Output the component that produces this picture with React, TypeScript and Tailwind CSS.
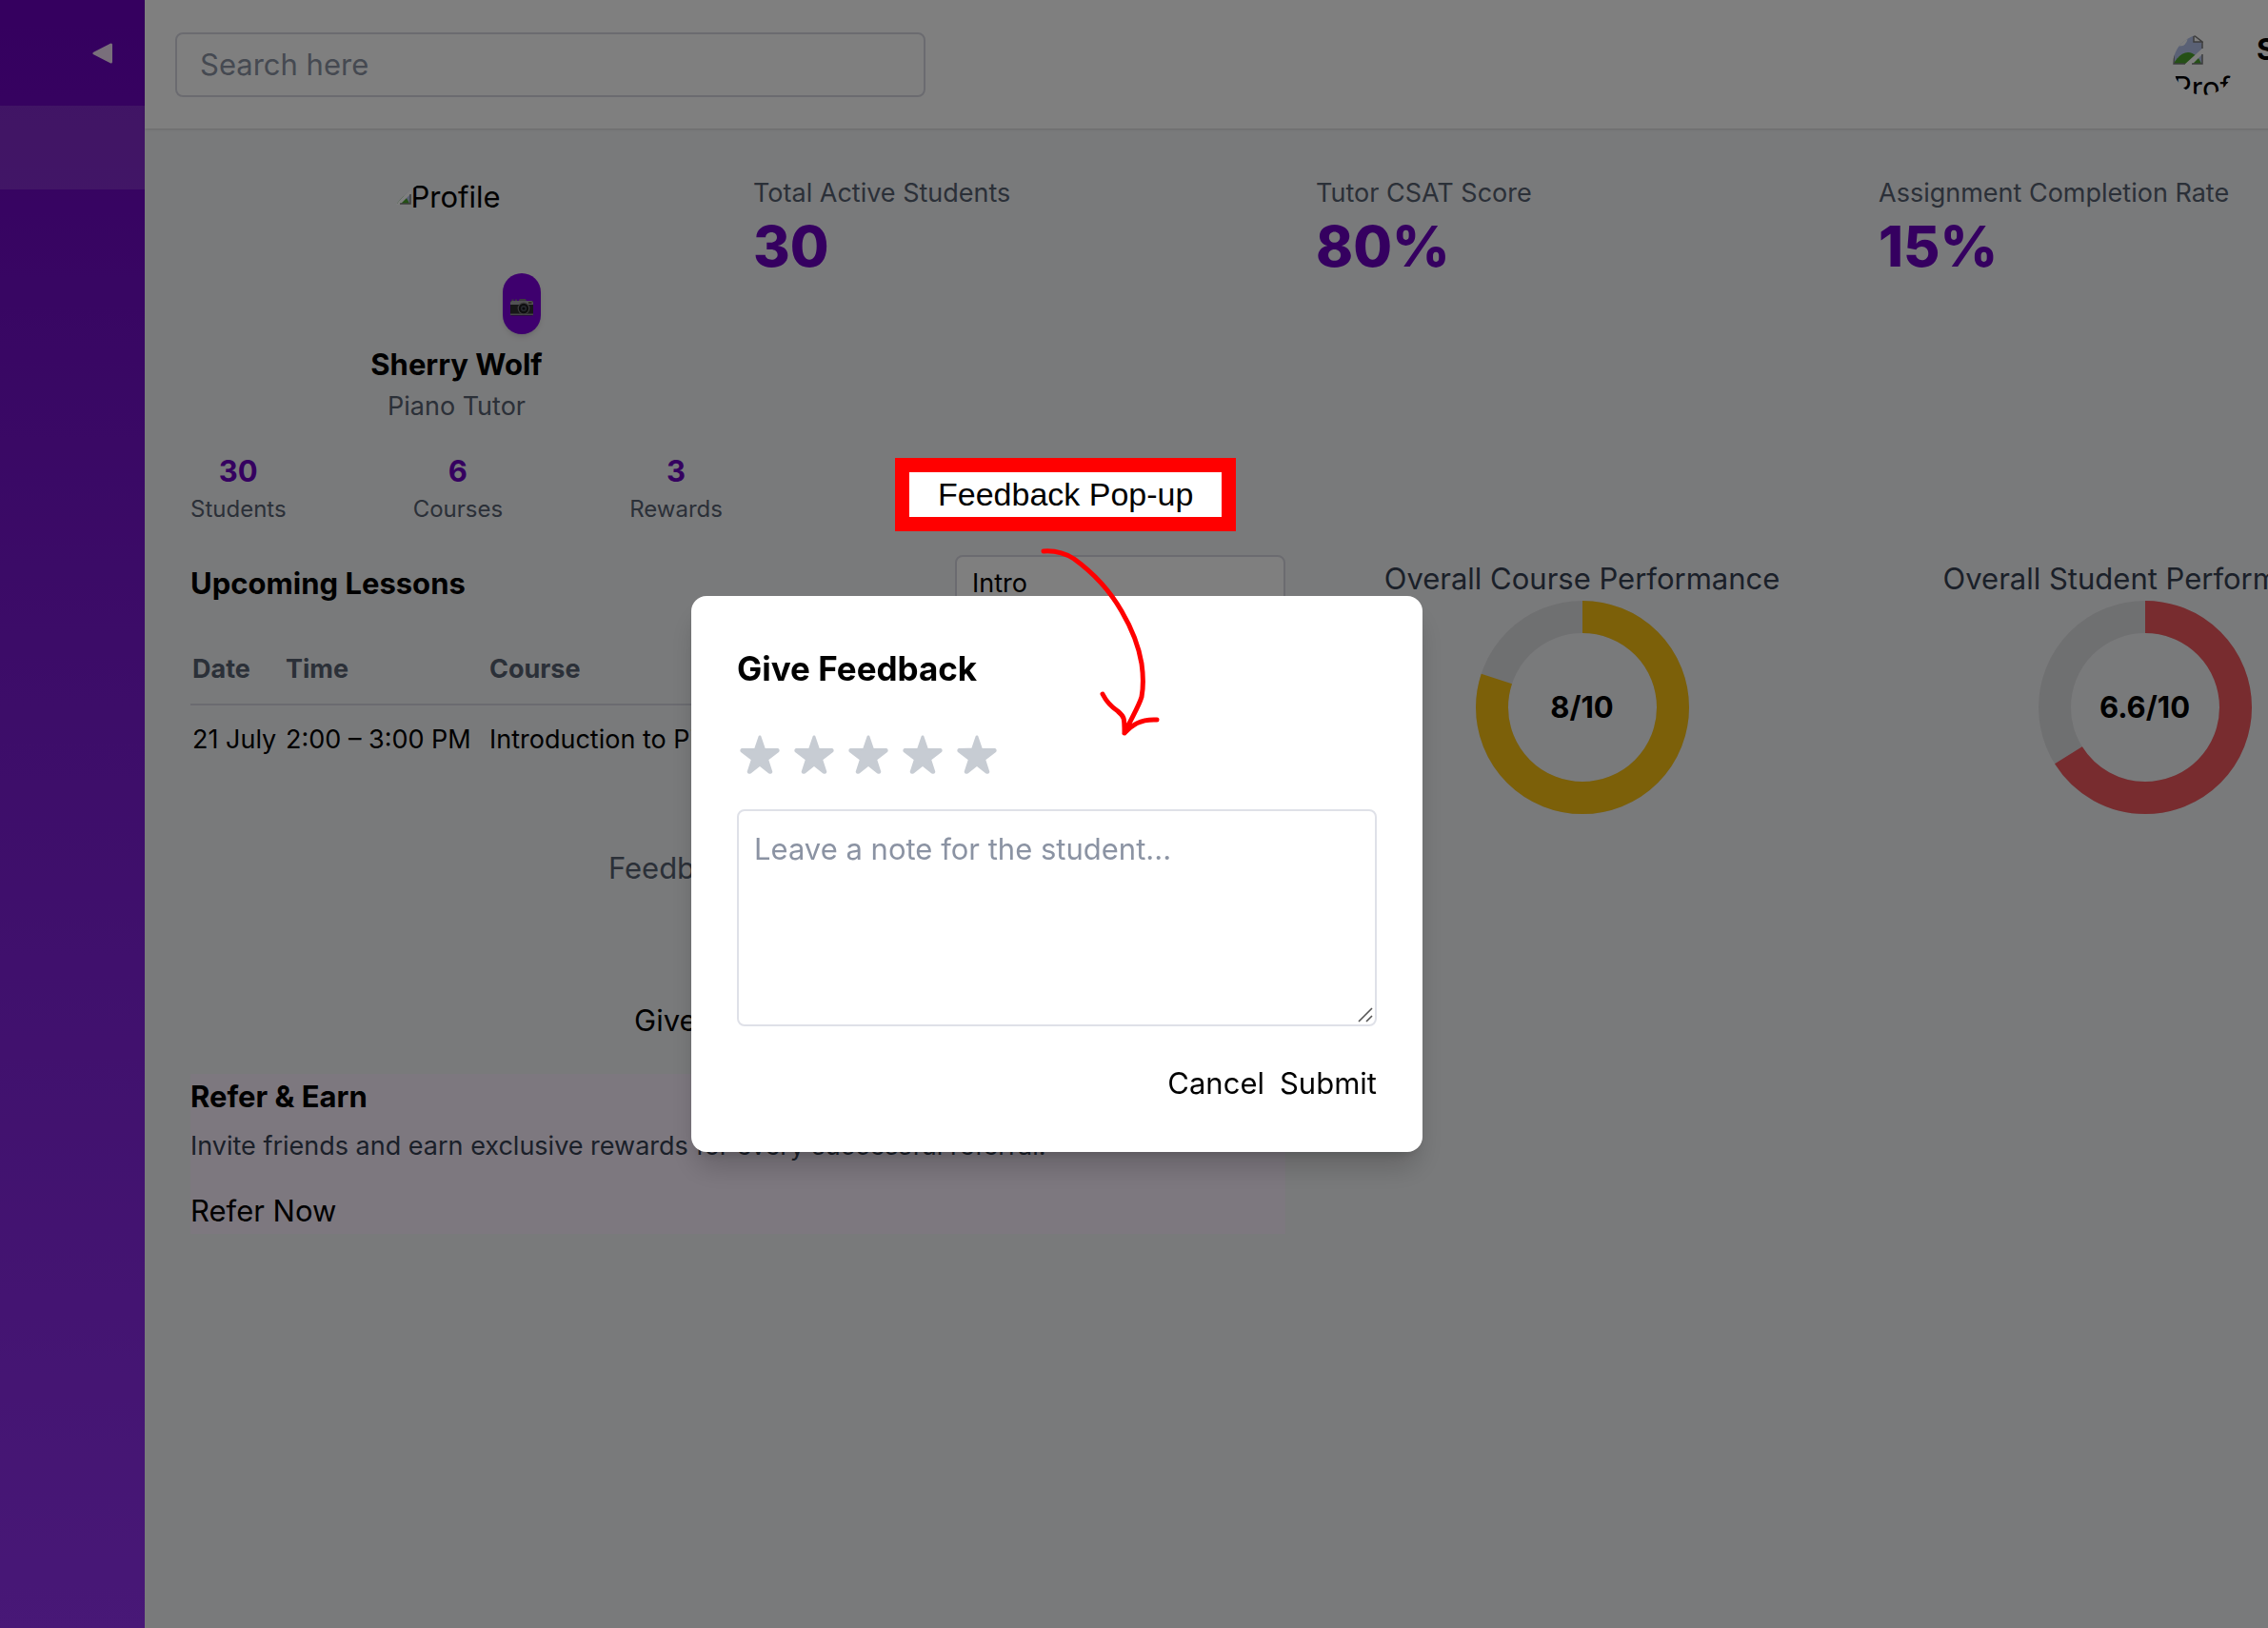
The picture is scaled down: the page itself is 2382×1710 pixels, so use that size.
import React from "react";

const profileStats = [
  { value: "30", label: "Students" },
  { value: "6", label: "Courses" },
  { value: "3", label: "Rewards" },
];

const metrics = [
  { label: "Total Active Students", value: "30" },
  { label: "Tutor CSAT Score", value: "80%" },
  { label: "Assignment Completion Rate", value: "15%" },
];

function MissingImage() {
  return (
    <svg viewBox="0 0 32 32" className="size-8 shrink-0" aria-hidden="true">
      <path d="M1 1H22L31 10V31H1Z" fill="#b4c3ea" />
      <path d="M1 31C5 23 11 19 16 19C22 19 28 25 30 31Z" fill="#4aa02c" />
      <path d="M32 14V20L20 32H12Z" fill="#ffffff" />
      <path d="M0 0H15Q17 8 11 12L0 13Z" fill="#ffffff" />
      <path d="M22 1V8H31Z" fill="#ffffff" stroke="#7a7a7a" strokeWidth="1.5" />
      <path d="M31 8V15M31 21V31H20M13 31H1V14" fill="none" stroke="#7a7a7a" strokeWidth="1.5" />
    </svg>
  );
}

function CameraIcon() {
  return (
    <svg viewBox="0 0 24 18" className="w-6" aria-hidden="true">
      <rect x="0" y="2" width="24" height="15.5" rx="1.5" fill="#2e2e30" />
      <path d="M0 4Q0 2 2 2H22Q24 2 24 4V6H0Z" fill="#a5a5a8" />
      <path d="M1.5 0.5H3.5V2H1.5ZM5 0.5H7V2H5ZM9 1L10 0H16L17 2H9Z" fill="#77777a" />
      <rect x="0" y="15.5" width="24" height="1.5" fill="#8b8b8e" />
      <circle cx="14" cy="10" r="6.4" fill="#77777a" />
      <circle cx="14" cy="10" r="5.2" fill="#1c1c1e" />
      <circle cx="14" cy="10" r="3" fill="#4d5560" />
      <circle cx="14" cy="10" r="1.6" fill="#15171a" />
      <rect x="19" y="3" width="3.5" height="2" fill="#6a5a50" />
    </svg>
  );
}

function Donut({ title, value, color }: { title: string; value: number; color: string }) {
  const length = 2 * Math.PI * 95;
  return (
    <section className="flex flex-col items-center">
      <h2 className="text-[31px] leading-[50px] -mb-0.5 whitespace-nowrap text-gray-700">{title}</h2>
      <div className="grid size-56 place-items-center">
        <svg viewBox="0 0 224 224" className="col-start-1 row-start-1 size-56 -rotate-90" aria-hidden="true">
          <circle cx="112" cy="112" r="95" fill="none" stroke="#dfe0e3" strokeWidth="34" />
          <circle
            cx="112"
            cy="112"
            r="95"
            fill="none"
            stroke={color}
            strokeWidth="34"
            strokeDasharray={`${(length * value) / 10} ${length}`}
          />
        </svg>
        <span className="col-start-1 row-start-1 text-[31px] leading-[48px] font-bold">{value}/10</span>
      </div>
    </section>
  );
}

function FeedbackDialog() {
  return (
    <div className="fixed inset-0 flex items-center justify-center bg-black/50 pt-[126px] pr-[162px]">
      <div
        role="dialog"
        aria-labelledby="feedback-title"
        className="w-full max-w-[768px] rounded-2xl bg-white p-12 shadow-[0_20px_30px_-6px_rgba(0,0,0,0.2),0_8px_12px_-8px_rgba(0,0,0,0.2)]"
      >
        <h2 id="feedback-title" className="text-[35px] leading-14 font-bold">
          Give Feedback
        </h2>
        <div className="mt-8 flex gap-[9px]">
          {[1, 2, 3, 4, 5].map((n) => (
            <button key={n} type="button" aria-label={`${n} stars`} className="flex h-15 w-12 items-center justify-center">
              <svg viewBox="0 0 42 41" className="w-[42px]" aria-hidden="true">
                <path
                  d="M21 2L25.5 15.2L39.8 15.4Q40.6 16.4 39.4 17.4L28.6 25.6L32.8 38.6Q32.4 39.6 31.4 39.2L21 31L10.6 39.2Q9.6 39.6 9.2 38.6L13.4 25.6L2.6 17.4Q1.4 16.4 2.2 15.4L16.5 15.2Z"
                  fill="#c7ccd3"
                  stroke="#c7ccd3"
                  strokeWidth="3"
                  strokeLinejoin="round"
                />
              </svg>
            </button>
          ))}
        </div>
        <div className="relative mt-7">
          <textarea
            aria-label="Note for the student"
            placeholder="Leave a note for the student..."
            className="block h-[228px] w-full resize-none rounded-lg border-2 border-[#dfe1e8] p-4 text-[31px] leading-[48px] placeholder:text-[#8b93a3]"
          />
          <svg viewBox="0 0 16 16" className="absolute right-1 bottom-1 size-4" aria-hidden="true">
            <path d="M1 15L15 1M9 15L15 9" stroke="#555555" strokeWidth="1.6" fill="none" />
          </svg>
        </div>
        <div className="mt-9 flex justify-end gap-4 text-[31px] leading-[48px]">
          <button type="button">Cancel</button>
          <button type="button">Submit</button>
        </div>
      </div>
    </div>
  );
}

function Annotation() {
  return (
    <>
      <div className="absolute top-[481px] left-[940px] border-[15px] border-[#ff0000] bg-white px-[30px] text-[34px] leading-[47px] whitespace-nowrap font-['Liberation_Sans',sans-serif]">
        Feedback Pop-up
      </div>
      <svg viewBox="0 0 130 200" className="absolute top-[575px] left-[1090px] w-[130px]" aria-hidden="true">
        <path
          d="M6 4C20 3 30 7 38 12C60 28 76 46 88 67C98 84 106 104 109 122C111 136 111 146 109 157C106 167 99 178 91 195M68 154C72 162 78 168 84 172C91 178 91 179 91 195C99 187 107 180 125 181"
          fill="none"
          stroke="#ff0000"
          strokeWidth="5"
          strokeLinecap="round"
          strokeLinejoin="round"
        />
      </svg>
    </>
  );
}

export default function App() {
  return (
    <div className="relative flex min-h-screen overflow-hidden bg-gray-100 font-['Inter',sans-serif] text-black">
      <aside className="w-[152px] shrink-0 bg-linear-to-b from-[#6a00be] to-[#9030ee]">
        <div className="flex h-[111px] items-center justify-end pr-[34px]">
          <button type="button" aria-label="Collapse sidebar">
            <svg viewBox="0 0 21 22" className="w-[21px]" aria-hidden="true">
              <path d="M2 11L19.5 2V20Z" fill="#f3dff7" stroke="#f3dff7" strokeWidth="3" strokeLinejoin="round" />
            </svg>
          </button>
        </div>
        <div className="h-22 bg-white/15" />
      </aside>

      <div className="w-[calc(100vw+46px)] shrink-0">
        <header className="flex h-[135px] items-center gap-6 bg-white px-8 shadow">
          <input
            type="search"
            aria-label="Search"
            placeholder="Search here"
            className="h-[68px] w-1/3 rounded-lg border-2 border-[#d6d7e0] px-6 text-[31px] leading-[48px] placeholder:text-[#8b93a3]"
          />
          <div className="ml-auto flex w-[266px] items-start gap-6">
            <div className="size-16 shrink-0 overflow-hidden rounded-full text-[31px] leading-[48px]">
              <MissingImage />
              <span>Profile</span>
            </div>
            <span className="text-[31px] leading-8 font-bold whitespace-nowrap">Sherry Wolf</span>
          </div>
        </header>

        <main className="grid grid-cols-4 gap-8 p-12">
          <section>
            <div className="relative mx-auto size-40">
              <div className="flex size-40 items-start overflow-hidden rounded-full text-[31px] leading-[48px]">
                <MissingImage />
                <span>Profile</span>
              </div>
              <button
                type="button"
                aria-label="Change photo"
                className="absolute -right-2 -bottom-2 flex h-16 w-10 items-center justify-center rounded-full bg-[#7c00dc] pt-2 shadow-md"
              >
                <CameraIcon />
              </button>
            </div>
            <h2 className="mt-4 text-center text-[31px] leading-[48px] font-bold">Sherry Wolf</h2>
            <p className="text-center text-[27px] leading-10 text-[#566070]">Piano Tutor</p>
            <div className="mt-6 flex justify-between text-center">
              {profileStats.map((s) => (
                <div key={s.label}>
                  <p className="text-[31px] leading-[48px] font-bold text-[#6a00c0]">{s.value}</p>
                  <p className="text-[24px] leading-8 text-[#566070]">{s.label}</p>
                </div>
              ))}
            </div>
          </section>

          {metrics.map((m) => (
            <section key={m.label}>
              <p className="text-[27px] leading-10 text-[#566070]">{m.label}</p>
              <p className="text-[59px] leading-18 font-extrabold text-[#6a00c0]">{m.value}</p>
            </section>
          ))}

          <div className="col-span-2">
            <div className="flex items-center justify-between">
              <h2 className="text-[31px] leading-[48px] font-bold">Upcoming Lessons</h2>
              <select
                aria-label="Course filter"
                className="h-15 w-[347px] appearance-none rounded-lg border-2 border-[#d6d7e0] bg-white px-4 text-[27px] leading-10"
              >
                <option>Intro</option>
              </select>
            </div>
            <table className="mt-10 w-full text-left text-[27px] leading-10">
              <thead className="border-b-2 border-[#d6d7e0] text-[#566070]">
                <tr>
                  <th className="w-[98px] px-0.5 pb-4 font-bold">Date</th>
                  <th className="w-[214px] px-0.5 pb-4 font-bold">Time</th>
                  <th className="px-0.5 pb-4 font-bold">Course</th>
                </tr>
              </thead>
              <tbody>
                <tr>
                  <td className="px-0.5 py-4 whitespace-nowrap">21 July</td>
                  <td className="px-0.5 py-4 whitespace-nowrap">2:00 – 3:00 PM</td>
                  <td className="px-0.5 py-4 whitespace-nowrap">Introduction to Piano</td>
                </tr>
              </tbody>
            </table>
            <div className="mt-[75px] flex flex-col items-center text-[31px] leading-[48px]">
              <p className="text-[#566070]">Feedback Pending</p>
              <button type="button" className="mt-28">
                Give Feedback
              </button>
            </div>
            <section className="mt-8 bg-[#faf0ff]">
              <h2 className="text-[31px] leading-[48px] font-bold">Refer &amp; Earn</h2>
              <p className="mt-2 text-[27px] leading-10 text-gray-700">
                Invite friends and earn exclusive rewards for every successful referral.
              </p>
              <button type="button" className="mt-6 block text-[31px] leading-[48px]">
                Refer Now
              </button>
            </section>
          </div>

          <Donut title="Overall Course Performance" value={8} color="#f8c012" />
          <Donut title="Overall Student Performance" value={6.6} color="#f0585e" />
        </main>
      </div>

      <FeedbackDialog />
      <Annotation />
    </div>
  );
}
